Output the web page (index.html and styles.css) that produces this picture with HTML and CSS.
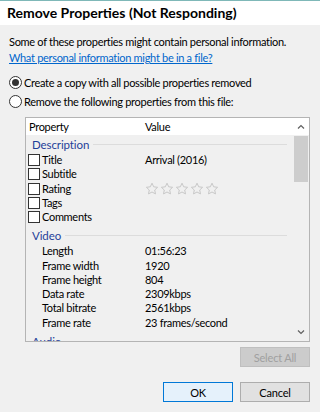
FILE: index.html
```html
<!DOCTYPE html>
<html lang="en">
<head>
<meta charset="UTF-8">
<meta name="viewport" content="width=device-width, initial-scale=1.0">
<title>Remove Properties</title>
<link rel="stylesheet" href="styles.css">
</head>
<body>

<div class="window">
  <div class="titlebar">Remove Properties (Not Responding)</div>

  <div class="dialog">
    <p class="intro">Some of these properties might contain personal information.</p>
    <a class="help" href="#">What personal information might be in a file?</a>

    <div class="options">
      <div class="radio checked"><span class="dot"></span>Create a copy with all possible properties removed</div>
      <div class="radio"><span class="dot"></span>Remove the following properties from this file:</div>
    </div>

    <div class="list">
      <div class="list-main">
        <div class="list-head"><span class="col-prop">Property</span><span>Value</span></div>

        <div class="group"><span>Description</span></div>
        <div class="row"><span class="name"><span class="check"></span>Title</span><span>Arrival (2016)</span></div>
        <div class="row"><span class="name"><span class="check"></span>Subtitle</span><span></span></div>
        <div class="row"><span class="name"><span class="check"></span>Rating</span>
          <span class="stars">
            <svg viewBox="0 0 14 14"><path d="M7 1.2l1.7 3.6 3.9.5-2.9 2.7.8 3.9L7 10l-3.5 1.9.8-3.9-2.9-2.7 3.9-.5z"/></svg>
            <svg viewBox="0 0 14 14"><path d="M7 1.2l1.7 3.6 3.9.5-2.9 2.7.8 3.9L7 10l-3.5 1.9.8-3.9-2.9-2.7 3.9-.5z"/></svg>
            <svg viewBox="0 0 14 14"><path d="M7 1.2l1.7 3.6 3.9.5-2.9 2.7.8 3.9L7 10l-3.5 1.9.8-3.9-2.9-2.7 3.9-.5z"/></svg>
            <svg viewBox="0 0 14 14"><path d="M7 1.2l1.7 3.6 3.9.5-2.9 2.7.8 3.9L7 10l-3.5 1.9.8-3.9-2.9-2.7 3.9-.5z"/></svg>
            <svg viewBox="0 0 14 14"><path d="M7 1.2l1.7 3.6 3.9.5-2.9 2.7.8 3.9L7 10l-3.5 1.9.8-3.9-2.9-2.7 3.9-.5z"/></svg>
          </span>
        </div>
        <div class="row"><span class="name"><span class="check"></span>Tags</span><span></span></div>
        <div class="row"><span class="name"><span class="check"></span>Comments</span><span></span></div>

        <div class="group"><span>Video</span></div>
        <div class="row plain"><span class="name">Length</span><span>01:56:23</span></div>
        <div class="row plain"><span class="name">Frame width</span><span>1920</span></div>
        <div class="row plain"><span class="name">Frame height</span><span>804</span></div>
        <div class="row plain"><span class="name">Data rate</span><span>2309kbps</span></div>
        <div class="row plain"><span class="name">Total bitrate</span><span>2561kbps</span></div>
        <div class="row plain"><span class="name">Frame rate</span><span>23 frames/second</span></div>

        <div class="group"><span>Audio</span></div>
      </div>

      <div class="scrollbar">
        <div class="arrow"><svg viewBox="0 0 8 5"><path d="M1 4.5L4 1.5 7 4.5"/></svg></div>
        <div class="thumb"></div>
        <div class="track"></div>
        <div class="arrow"><svg viewBox="0 0 8 5"><path d="M1 .5L4 3.5 7 .5"/></svg></div>
      </div>
    </div>

    <div class="select-row">
      <button class="btn" disabled>Select All</button>
    </div>

    <div class="actions">
      <button class="btn ok">OK</button>
      <button class="btn">Cancel</button>
    </div>
  </div>
</div>

</body>
</html>
```

FILE: styles.css
```css
/* Global Styles */
body {
  margin: 0;
  padding: 0;
  font-family: 'Lato', 'Liberation Sans', sans-serif;
  font-size: 11px;
  letter-spacing: -0.3px;
  color: #000;
  background-color: #f0f0f0;
  overflow: hidden;
}

.window {
  width: 320px;
  height: 412px;
  background-color: #f0f0f0;
}

.titlebar {
  height: 24px;
  line-height: 24px;
  border-top: 1px solid #7fb8b8;
  background-color: #fff;
  padding-left: 7px;
  font-size: 14px;
  font-weight: bold;
  letter-spacing: 0;
}

.dialog {
  padding: 9px 10px 0 9px;
}

.intro {
  margin: 0;
  line-height: 16px;
  white-space: nowrap;
}

.help {
  display: block;
  line-height: 16px;
  color: #0066cc;
  text-decoration: underline;
}

.options {
  margin-top: 7px;
}

.radio {
  display: flex;
  align-items: center;
  height: 19px;
  white-space: nowrap;
}

.radio .dot {
  box-sizing: border-box;
  width: 13px;
  height: 13px;
  border: 1px solid #333;
  border-radius: 50%;
  background-color: #fff;
  margin-right: 2px;
  display: flex;
  align-items: center;
  justify-content: center;
}

.radio.checked .dot::after {
  content: "";
  width: 7px;
  height: 7px;
  border-radius: 50%;
  background-color: #333;
}

/* Property list */
.list {
  margin: 6px 0 0 16px;
  height: 223px;
  border: 1px solid #b4b4b4;
  display: flex;
  overflow: hidden;
}

.list-main {
  flex: 1;
  overflow: hidden;
}

.list-head {
  display: grid;
  grid-template-columns: 119px 1fr;
  height: 17px;
  line-height: 17px;
  background-color: #fff;
}

.col-prop {
  padding-left: 3px;
}

.group {
  display: flex;
  align-items: center;
  height: 17px;
  margin-top: 3px;
  padding: 0 6px;
  color: #1f3f99;
  font-size: 11.5px;
  letter-spacing: -0.1px;
}

.list-head + .group {
  margin-top: 1px;
}

.group::after {
  content: "";
  flex: 1;
  height: 1px;
  margin-left: 4px;
  background-color: #dcdcdc;
}

.row {
  display: grid;
  grid-template-columns: 119px 1fr;
  height: 14.25px;
  line-height: 14.25px;
}

.row .name {
  display: flex;
  align-items: center;
  padding-left: 2px;
}

.row.plain .name {
  padding-left: 16px;
}

.check {
  box-sizing: border-box;
  width: 12px;
  height: 12px;
  border: 1px solid #333;
  background-color: #fff;
  margin-right: 2px;
}

.stars {
  display: flex;
  align-items: center;
  gap: 1px;
}

.stars svg {
  width: 14px;
  height: 14px;
  fill: none;
  stroke: #c8c8c8;
  stroke-width: 1;
}

/* Scrollbar */
.scrollbar {
  width: 16px;
  display: flex;
  flex-direction: column;
  background-color: #f0f0f0;
}

.arrow {
  height: 17px;
  display: flex;
  align-items: center;
  justify-content: center;
  background-color: #fff;
}

.arrow:last-child {
  background-color: #f0f0f0;
}

.arrow svg {
  width: 8px;
  height: 5px;
  fill: none;
  stroke: #606060;
  stroke-width: 1.2;
}

.thumb {
  height: 46px;
  margin: 1px 1px 0 1px;
  background-color: #cdcdcd;
}

.track {
  flex: 1;
}

/* Buttons */
.select-row,
.actions {
  display: flex;
  justify-content: flex-end;
  gap: 7px;
}

.select-row {
  margin-top: 5px;
}

.actions {
  margin-top: 15px;
}

.btn {
  width: 70px;
  height: 20px;
  padding: 0;
  font-family: inherit;
  font-size: 11px;
  letter-spacing: -0.2px;
  color: #000;
  background-color: #e1e1e1;
  border: 1px solid #adadad;
}

.btn:disabled {
  color: #a0a0a0;
  background-color: #cccccc;
  border-color: #bfbfbf;
}

.btn.ok {
  background-color: #e5f1fb;
  border-color: #0078d7;
}
```
